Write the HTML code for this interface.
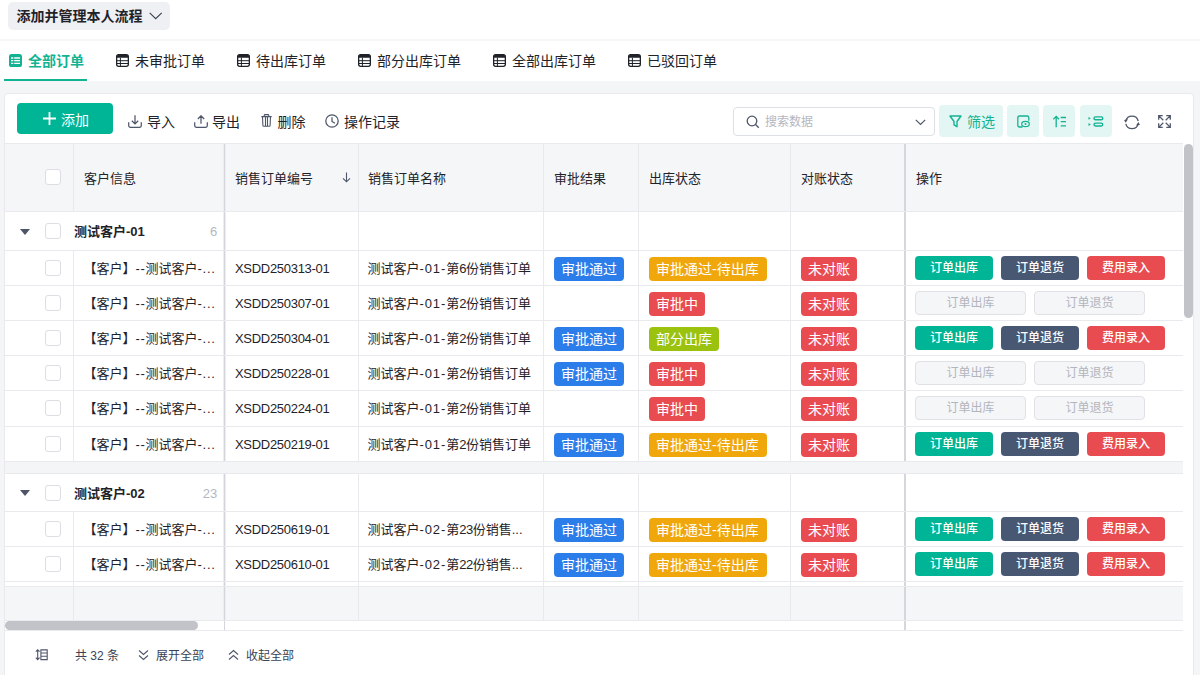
<!DOCTYPE html>
<html lang="zh-CN">
<head>
<meta charset="utf-8">
<title>销售订单</title>
<style>
*{box-sizing:border-box;margin:0;padding:0}
html,body{width:1200px;height:675px;overflow:hidden;background:#f4f5f7}
body{font-family:"Liberation Sans","Noto Sans CJK SC",sans-serif;font-size:13px;color:#1f2329;position:relative}
i{font-style:normal;display:block}
.abs{position:absolute}
/* top bar */
#top{position:absolute;left:0;top:0;width:1200px;height:41px;background:#fff;border-bottom:2px solid #f6f7f9}
#pill{position:absolute;left:8px;top:2px;width:161.500px;height:28px;background:#eff0f4;border-radius:5px;font-size:14px;font-weight:bold;line-height:28px;padding-left:8.500px;color:#1f2329}
#pill svg{position:absolute;left:141px;top:10.300px}
/* tabs */
#tabs{position:absolute;left:0;top:41px;width:1200px;height:40px;background:#fff}
.tab{position:absolute;top:-1px;height:41px;line-height:43px;font-size:14px;color:#1f2329;white-space:nowrap}
.tab svg{position:absolute;left:0;top:13.500px}
.tab span{position:absolute;left:19px;top:0}
.tab.on{color:#12b392;font-weight:700}
#uline{position:absolute;left:4px;top:38px;width:83px;height:2px;background:#12b392}
/* panel */
#panel{position:absolute;left:4px;top:93px;width:1190px;height:590px;background:#fff;border:1px solid #e9eaed;border-radius:4px}
#add{position:absolute;left:17px;top:103px;width:96px;height:31px;background:#00b496;border-radius:4px;color:#fff;font-size:14px;line-height:34px}
#add span{position:absolute;left:44px;top:0}
#add svg{position:absolute;left:25px;top:8px}
.tb{position:absolute;top:108px;height:28px;line-height:28px;font-size:14px;color:#1f2329;white-space:nowrap}
.tb svg{position:absolute;left:0;top:7.300px}
.tb span{position:absolute;left:18px;top:0}
#search{position:absolute;left:733px;top:107px;width:202px;height:29px;border:1px solid #dcdfe5;border-radius:4px;background:#fff}
#search span{position:absolute;left:31px;top:0;line-height:29px;font-size:12px;color:#b4b7bf}
.gb{position:absolute;top:105px;height:32px;width:32px;background:#e4f6f3;border-radius:4px;color:#12b392;font-size:14px;line-height:34px}
.gb svg{position:absolute}
/* table */
#thead{position:absolute;left:5px;top:143px;width:1178px;height:69px;background:#f5f6f8;border-top:1px solid #e9eaed;border-bottom:1px solid #e9eaed}
.th{position:absolute;top:0;height:67px;line-height:70px;font-size:13px;color:#1f2329;border-right:1px solid #e9eaed;padding-left:10px;white-space:nowrap}
.tr{position:absolute;left:5px;width:1178px;height:35px;background:#fff;border-bottom:1px solid #e9eaed}
.tr.grp{height:38px}
.td{position:absolute;top:0;height:100%;border-right:1px solid #e9eaed;line-height:35px;font-size:13px;white-space:nowrap;overflow:hidden;padding-left:10px;color:#1f2329}
.c0{left:0;width:69px}
.c1{left:69px;width:151px;border-right:1px solid #d4d5da;box-shadow:inset -1px 0 0 #eceef1,1px 0 0 #eceef1;z-index:2}
.c01{left:0;width:220px;border-right:1px solid #d4d5da;box-shadow:inset -1px 0 0 #eceef1,1px 0 0 #eceef1;z-index:2}
.c2{left:220px;width:134px}
.tr .c2{letter-spacing:-0.300px}
.c3{left:354px;width:185px;padding-left:8.500px}
.h{letter-spacing:.9px}
.h2{letter-spacing:.7px}
.n{letter-spacing:-.5px}
.c4{left:539px;width:95px}
.c5{left:634px;width:152px}
.c6{left:786px;width:113px;border-right:none}
.c7{left:899px;width:279px;border-left:2px solid #d6d7dc;border-right:none}
.cb{position:absolute;left:40px;top:9px;width:16px;height:16px;border:1px solid #dcdee3;border-radius:3px;background:#fff}
.grp .cb{top:11px}
.tri{position:absolute;left:15.200px;top:16.800px;width:0;height:0;border-left:5.100px solid transparent;border-right:5.100px solid transparent;border-top:6.500px solid #4d5567}
.g2r .tri{top:16.300px}
.g2r .cb{top:10.500px}
.g2r .gl,.g2r .gc{top:-0.500px}
.gl{position:absolute;left:69px;top:0;line-height:40px;font-size:13px}
.gc{position:absolute;right:6.700px;top:0;line-height:40px;font-size:13px;color:#b4b7bf}
.cust{position:absolute;left:9.500px;top:0}
.tag{position:absolute;left:10px;top:6px;height:24px;line-height:24px;padding:0 7px;border-radius:4px;color:#fff;font-size:14px}
.tag.b{background:#2b7de9}
.tag.o{background:#f0a70c}
.tag.w{width:118px}
.tag.r{background:#e84c51}
.tag.g{background:#9bc20f}
.ob{position:absolute;top:5px;height:24px;width:78px;line-height:24px;text-align:center;border-radius:4px;color:#fff;font-size:12px;font-weight:500}
.g1{left:9px;background:#00b496}
.g2{left:95px;background:#485772}
.g3{left:181px;background:#e84c51}
.ob.dis{left:9px;width:111px;background:#f5f6f8;border:1px solid #e0e1e6;color:#b2b5bd;font-weight:normal;line-height:23px}
.ob.d2{left:128px;width:111px}
.gap{position:absolute;left:5px;width:1178px;background:#f4f5f7}
</style>
</head>
<body>
<div id="top"><div id="pill">添加并管理本人流程<svg width="14" height="8" viewBox="0 0 14 8"><path d="M0.700 0.800L6.700 6.700 12.700 0.800" fill="none" stroke="#3a4254" stroke-width="1.150"/></svg></div></div>
<div id="tabs">
<div class="tab on" style="left:9px"><svg width="13" height="13" viewBox="0 0 13 13"><rect x="0" y="0" width="13" height="13" rx="2.600" fill="#12b392"/><path d="M2 4h2.300M5.200 4h5.800M2 6.700h2.300M5.200 6.700h5.800M2 9.400h2.300M5.200 9.400h5.800" stroke="#fff" stroke-width="1.300" fill="none"/></svg><span>全部订单</span></div>
<div class="tab" style="left:116px"><svg width="13" height="13" viewBox="0 0 13 13"><rect x="0.650" y="0.650" width="11.700" height="11.700" rx="2" fill="none" stroke="#1f2329" stroke-width="1.300"/><path d="M0.650 3.800V2.600q0-1.950 1.950-1.950h7.800q1.950 0 1.950 1.950V3.800z" fill="#1f2329"/><path d="M1 6.700h11M1 9.500h11M4.400 3.800v8.400" stroke="#1f2329" stroke-width="1" fill="none"/></svg><span>未审批订单</span></div>
<div class="tab" style="left:237px"><svg width="13" height="13" viewBox="0 0 13 13"><rect x="0.650" y="0.650" width="11.700" height="11.700" rx="2" fill="none" stroke="#1f2329" stroke-width="1.300"/><path d="M0.650 3.800V2.600q0-1.950 1.950-1.950h7.800q1.950 0 1.950 1.950V3.800z" fill="#1f2329"/><path d="M1 6.700h11M1 9.500h11M4.400 3.800v8.400" stroke="#1f2329" stroke-width="1" fill="none"/></svg><span>待出库订单</span></div>
<div class="tab" style="left:358px"><svg width="13" height="13" viewBox="0 0 13 13"><rect x="0.650" y="0.650" width="11.700" height="11.700" rx="2" fill="none" stroke="#1f2329" stroke-width="1.300"/><path d="M0.650 3.800V2.600q0-1.950 1.950-1.950h7.800q1.950 0 1.950 1.950V3.800z" fill="#1f2329"/><path d="M1 6.700h11M1 9.500h11M4.400 3.800v8.400" stroke="#1f2329" stroke-width="1" fill="none"/></svg><span>部分出库订单</span></div>
<div class="tab" style="left:493px"><svg width="13" height="13" viewBox="0 0 13 13"><rect x="0.650" y="0.650" width="11.700" height="11.700" rx="2" fill="none" stroke="#1f2329" stroke-width="1.300"/><path d="M0.650 3.800V2.600q0-1.950 1.950-1.950h7.800q1.950 0 1.950 1.950V3.800z" fill="#1f2329"/><path d="M1 6.700h11M1 9.500h11M4.400 3.800v8.400" stroke="#1f2329" stroke-width="1" fill="none"/></svg><span>全部出库订单</span></div>
<div class="tab" style="left:628px"><svg width="13" height="13" viewBox="0 0 13 13"><rect x="0.650" y="0.650" width="11.700" height="11.700" rx="2" fill="none" stroke="#1f2329" stroke-width="1.300"/><path d="M0.650 3.800V2.600q0-1.950 1.950-1.950h7.800q1.950 0 1.950 1.950V3.800z" fill="#1f2329"/><path d="M1 6.700h11M1 9.500h11M4.400 3.800v8.400" stroke="#1f2329" stroke-width="1" fill="none"/></svg><span>已驳回订单</span></div>
<div id="uline"></div>
</div>


<div id="panel"></div>
<div id="add"><svg width="15" height="15" viewBox="0 0 15 15"><path d="M7.5 1v13M1 7.5h13" stroke="#fff" stroke-width="1.8"/></svg><span>添加</span></div>
<div class="tb" style="left:128px"><svg width="14" height="13" viewBox="0 0 14 13"><path d="M7 0.300v8.500M3.800 5.700L7 8.900 10.200 5.700M0.700 7.200v3.200q0 2 2 2h8.600q2 0 2-2v-3.200" fill="none" stroke="#4e566a" stroke-width="1.250"/></svg><span style="left:19px">导入</span></div>
<div class="tb" style="left:194px"><svg width="14" height="13" viewBox="0 0 14 13"><path d="M7 8.700v-8M3.800 4L7 0.800 10.200 4M0.700 7.200v3.200q0 2 2 2h8.600q2 0 2-2v-3.200" fill="none" stroke="#4e566a" stroke-width="1.250"/></svg><span>导出</span></div>
<div class="tb" style="left:260.500px"><svg style="top:6.200px" width="11" height="13" viewBox="0 0 11 13"><path d="M0.300 2.600h10.400M3.200 2.600v-1.200q0-.8.800-.8h3q.8 0 .8.800v1.200M1.500 2.800l.4 8.600q0 .9.900.9h5.400q.9 0 .9-.9l.4-8.600M4.500 3.200v8.600M6.500 3.200v8.600" fill="none" stroke="#4e566a" stroke-width="1.100"/></svg><span style="left:17px">删除</span></div>
<div class="tb" style="left:325px"><svg style="top:5.700px" width="14" height="14" viewBox="0 0 14 14"><circle cx="7" cy="7" r="6.200" fill="none" stroke="#4e566a" stroke-width="1.250"/><path d="M7 3.200v4.300l2.900 1.800" fill="none" stroke="#4e566a" stroke-width="1.250"/></svg><span style="left:19px">操作记录</span></div>

<div id="search"><svg class="abs" style="left:12px;top:7px" width="14" height="14" viewBox="0 0 14 14"><circle cx="6" cy="6" r="4.800" fill="none" stroke="#4e566a" stroke-width="1.300"/><path d="M9.500 9.500l3.300 3.300" stroke="#4e566a" stroke-width="1.300"/></svg><span>搜索数据</span><svg class="abs" style="left:181px;top:11px" width="11" height="7" viewBox="0 0 11 7"><path d="M0.800 0.800l4.700 4.700 4.700-4.700" fill="none" stroke="#4e566a" stroke-width="1.200"/></svg></div>
<div class="gb" style="left:939px;width:64px"><svg style="left:10px;top:10px" width="13" height="13" viewBox="0 0 13 13"><path d="M1 1h11l-4 5.500v5.200l-3-1.800v-3.400z" fill="none" stroke="#12b392" stroke-width="1.400" stroke-linejoin="round"/></svg><span class="abs" style="left:28px;top:0">筛选</span></div>
<div class="gb" style="left:1007px"><svg style="left:10px;top:10px" width="13" height="13" viewBox="0 0 13 13"><path d="M5.500 12h-3q-1.700 0-1.700-1.700v-7.600q0-1.700 1.700-1.700h7.600q1.700 0 1.700 1.700v3" fill="none" stroke="#12b392" stroke-width="1.300"/><ellipse cx="8.500" cy="9" rx="3.800" ry="2.600" fill="none" stroke="#12b392" stroke-width="1.200"/><circle cx="8.500" cy="9" r="1" fill="#12b392"/></svg></div>
<div class="gb" style="left:1043px"><svg style="left:10px;top:10px" width="14" height="13" viewBox="0 0 14 13"><path d="M3.200 12.200v-10.600M0.400 4.300l2.800-2.900 2.800 2.900M7.700 2.500h5.300M7.700 6.600h5.300M7.700 10.900h5.300" fill="none" stroke="#12b392" stroke-width="1.300"/></svg></div>
<div class="gb" style="left:1080px"><svg style="left:8px;top:10px" width="16" height="13" viewBox="0 0 16 13"><rect x="6" y="1.900" width="8.700" height="2.900" rx="1.400" fill="none" stroke="#12b392" stroke-width="1.400"/><rect x="6" y="8.100" width="8.700" height="2.900" rx="1.400" fill="none" stroke="#12b392" stroke-width="1.400"/><path d="M0.500 1.900l2.300 1.450-2.300 1.450zM0.500 8.100l2.300 1.450-2.300 1.450z" fill="#12b392"/></svg></div>
<svg class="abs" style="left:1124px;top:114.600px" width="16" height="15" viewBox="0 0 16 15"><path d="M14.140 5.980A6.300 6.300 0 0 0 1.860 5.980M1.860 8.820A6.300 6.300 0 0 0 14.140 8.820" fill="none" stroke="#4e566a" stroke-width="1.300"/><path d="M1.500 7.700L0.100 4.900 4.100 4.300zM14.500 7.100L15.900 9.900 11.900 10.500z" fill="#4e566a"/></svg>
<svg class="abs" style="left:1158px;top:115px" width="13" height="13" viewBox="0 0 13 13"><path d="M0.700 4.700v-4h4M8.300 0.700h4v4M12.300 8.300v4h-4M4.700 12.300h-4v-4M0.900 0.900l4.400 4.400M12.100 0.900l-4.400 4.400M12.100 12.100l-4.400-4.400M0.900 12.100l4.400-4.400" fill="none" stroke="#4e566a" stroke-width="1.250"/></svg>

<div id="thead">
<div class="th" style="left:0;width:69px"><i class="cb" style="top:25px"></i></div>
<div class="th" style="left:69px;width:151px;border-right:1px solid #d4d5da;box-shadow:inset -1px 0 0 #eceef1,1px 0 0 #eceef1;z-index:2">客户信息</div>
<div class="th" style="left:220px;width:134px">销售订单编号<svg class="abs" style="left:117px;top:28px" width="9" height="11" viewBox="0 0 9 11"><path d="M4.500 0.500v9M1 6.300l3.500 3.500 3.500-3.500" fill="none" stroke="#4e566a" stroke-width="1.100"/></svg></div>
<div class="th" style="left:354px;width:185px;padding-left:9px">销售订单名称</div>
<div class="th" style="left:539px;width:95px">审批结果</div>
<div class="th" style="left:634px;width:152px">出库状态</div>
<div class="th" style="left:786px;width:113px;border-right:none">对账状态</div>
<div class="th" style="left:899px;width:279px;border-left:2px solid #d6d7dc;border-right:none;padding-left:10px">操作</div>
</div>
<div class="tr grp" style="top:212px;height:39px">
<div class="td c01"><i class="tri"></i><i class="cb"></i><b class="gl">测试客户-01</b><span class="gc">6</span></div>
<div class="td c2"></div><div class="td c3"></div><div class="td c4"></div><div class="td c5"></div><div class="td c6"></div><div class="td c7"></div>
</div>
<div class="tr" style="top:251px;height:35px">
<div class="td c0"><i class="cb"></i></div>
<div class="td c1"><span class="cust">【客户】<span class="h2">--</span>测试客户<span class="h2">-...</span></span></div>
<div class="td c2">XSDD250313-01</div>
<div class="td c3">测试客户<span class="h">-01-</span>第<span class="n">6</span>份销售订单</div>
<div class="td c4"><span class="tag b">审批通过</span></div>
<div class="td c5"><span class="tag o w">审批通过-待出库</span></div>
<div class="td c6"><span class="tag r">未对账</span></div>
<div class="td c7"><span class="ob g1">订单出库</span><span class="ob g2">订单退货</span><span class="ob g3">费用录入</span></div>
</div>
<div class="tr" style="top:286px;height:35px">
<div class="td c0"><i class="cb"></i></div>
<div class="td c1"><span class="cust">【客户】<span class="h2">--</span>测试客户<span class="h2">-...</span></span></div>
<div class="td c2">XSDD250307-01</div>
<div class="td c3">测试客户<span class="h">-01-</span>第<span class="n">2</span>份销售订单</div>
<div class="td c4"></div>
<div class="td c5"><span class="tag r">审批中</span></div>
<div class="td c6"><span class="tag r">未对账</span></div>
<div class="td c7"><span class="ob dis">订单出库</span><span class="ob dis d2">订单退货</span></div>
</div>
<div class="tr" style="top:321px;height:35px">
<div class="td c0"><i class="cb"></i></div>
<div class="td c1"><span class="cust">【客户】<span class="h2">--</span>测试客户<span class="h2">-...</span></span></div>
<div class="td c2">XSDD250304-01</div>
<div class="td c3">测试客户<span class="h">-01-</span>第<span class="n">2</span>份销售订单</div>
<div class="td c4"><span class="tag b">审批通过</span></div>
<div class="td c5"><span class="tag g">部分出库</span></div>
<div class="td c6"><span class="tag r">未对账</span></div>
<div class="td c7"><span class="ob g1">订单出库</span><span class="ob g2">订单退货</span><span class="ob g3">费用录入</span></div>
</div>
<div class="tr" style="top:356px;height:35px">
<div class="td c0"><i class="cb"></i></div>
<div class="td c1"><span class="cust">【客户】<span class="h2">--</span>测试客户<span class="h2">-...</span></span></div>
<div class="td c2">XSDD250228-01</div>
<div class="td c3">测试客户<span class="h">-01-</span>第<span class="n">2</span>份销售订单</div>
<div class="td c4"><span class="tag b">审批通过</span></div>
<div class="td c5"><span class="tag r">审批中</span></div>
<div class="td c6"><span class="tag r">未对账</span></div>
<div class="td c7"><span class="ob dis">订单出库</span><span class="ob dis d2">订单退货</span></div>
</div>
<div class="tr" style="top:391px;height:36px">
<div class="td c0"><i class="cb"></i></div>
<div class="td c1"><span class="cust">【客户】<span class="h2">--</span>测试客户<span class="h2">-...</span></span></div>
<div class="td c2">XSDD250224-01</div>
<div class="td c3">测试客户<span class="h">-01-</span>第<span class="n">2</span>份销售订单</div>
<div class="td c4"></div>
<div class="td c5"><span class="tag r">审批中</span></div>
<div class="td c6"><span class="tag r">未对账</span></div>
<div class="td c7"><span class="ob dis">订单出库</span><span class="ob dis d2">订单退货</span></div>
</div>
<div class="tr" style="top:427px;height:35px">
<div class="td c0"><i class="cb"></i></div>
<div class="td c1"><span class="cust">【客户】<span class="h2">--</span>测试客户<span class="h2">-...</span></span></div>
<div class="td c2">XSDD250219-01</div>
<div class="td c3">测试客户<span class="h">-01-</span>第<span class="n">2</span>份销售订单</div>
<div class="td c4"><span class="tag b">审批通过</span></div>
<div class="td c5"><span class="tag o w">审批通过-待出库</span></div>
<div class="td c6"><span class="tag r">未对账</span></div>
<div class="td c7"><span class="ob g1">订单出库</span><span class="ob g2">订单退货</span><span class="ob g3">费用录入</span></div>
</div>
<div class="tr grp g2r" style="top:473px;height:39px;border-top:1px solid #e9eaed">
<div class="td c01"><i class="tri"></i><i class="cb"></i><b class="gl">测试客户-02</b><span class="gc">23</span></div>
<div class="td c2"></div><div class="td c3"></div><div class="td c4"></div><div class="td c5"></div><div class="td c6"></div><div class="td c7"></div>
</div>
<div class="tr" style="top:512px;height:35px">
<div class="td c0"><i class="cb"></i></div>
<div class="td c1"><span class="cust">【客户】<span class="h2">--</span>测试客户<span class="h2">-...</span></span></div>
<div class="td c2">XSDD250619-01</div>
<div class="td c3">测试客户<span class="h">-02-</span>第<span class="n">23</span>份销售...</div>
<div class="td c4"><span class="tag b">审批通过</span></div>
<div class="td c5"><span class="tag o w">审批通过-待出库</span></div>
<div class="td c6"><span class="tag r">未对账</span></div>
<div class="td c7"><span class="ob g1">订单出库</span><span class="ob g2">订单退货</span><span class="ob g3">费用录入</span></div>
</div>
<div class="tr" style="top:547px;height:35px">
<div class="td c0"><i class="cb"></i></div>
<div class="td c1"><span class="cust">【客户】<span class="h2">--</span>测试客户<span class="h2">-...</span></span></div>
<div class="td c2">XSDD250610-01</div>
<div class="td c3">测试客户<span class="h">-02-</span>第<span class="n">22</span>份销售...</div>
<div class="td c4"><span class="tag b">审批通过</span></div>
<div class="td c5"><span class="tag o w">审批通过-待出库</span></div>
<div class="td c6"><span class="tag r">未对账</span></div>
<div class="td c7"><span class="ob g1">订单出库</span><span class="ob g2">订单退货</span><span class="ob g3">费用录入</span></div>
</div>

<div class="gap" style="top:462px;height:11px"></div>
<div class="tr" style="top:582px;height:5px"><div class="td c0"></div><div class="td c1"></div><div class="td c2"></div><div class="td c3"></div><div class="td c4"></div><div class="td c5"></div><div class="td c6"></div><div class="td c7"></div></div>
<div class="tr" id="sum" style="top:587px;height:34px;background:#f5f6f8"><div class="td c0"></div><div class="td c1"></div><div class="td c2"></div><div class="td c3"></div><div class="td c4"></div><div class="td c5"></div><div class="td c6"></div><div class="td c7"></div></div>
<div class="abs" style="left:5px;top:621px;width:1178px;height:10px;background:#fff;border-bottom:1px solid #e9eaed"><i class="abs" style="left:219px;top:0;width:1px;height:9px;background:#d4d5da"></i><i class="abs" style="left:899px;top:0;width:2px;height:9px;background:#d6d7dc"></i></div>
<div class="abs" style="left:5px;top:621px;width:193px;height:9px;border-radius:5px;background:#c1c3c9"></div>
<div class="abs" style="left:1183px;top:144px;width:10px;height:487px;background:#fff"></div>
<div class="abs" style="left:1184px;top:144px;width:9px;height:174px;border-radius:5px;background:#c1c3c9"></div>
<div class="abs" id="foot" style="left:5px;top:632px;width:1188px;height:43px;background:#fff;font-size:12px;line-height:48px;color:#3a4254">
<svg class="abs" style="left:29.500px;top:16.500px" width="13" height="12" viewBox="0 0 13 12"><path d="M2.700 0.800v9.800M0.800 2.700l1.900-1.900 1.900 1.900M0.800 8.700l1.900 1.900 1.900-1.900M5.900 0.900h6.300v9.700h-6.300zM5.900 4h6.300M5.900 7.300h6.300" fill="none" stroke="#4e566a" stroke-width="1.100"/></svg>
<span class="abs" style="left:70px">共 32 条</span>
<svg class="abs" style="left:133px;top:17px" width="11" height="12" viewBox="0 0 11 12"><path d="M1 1.500l4.500 4 4.500-4M1 6.500l4.500 4 4.500-4" fill="none" stroke="#4e566a" stroke-width="1.100"/></svg>
<span class="abs" style="left:151px">展开全部</span>
<svg class="abs" style="left:223px;top:17px" width="11" height="12" viewBox="0 0 11 12"><path d="M1 5.500l4.500-4 4.500 4M1 10.500l4.500-4 4.500 4" fill="none" stroke="#4e566a" stroke-width="1.100"/></svg>
<span class="abs" style="left:241px">收起全部</span>
</div>
</body>
</html>
